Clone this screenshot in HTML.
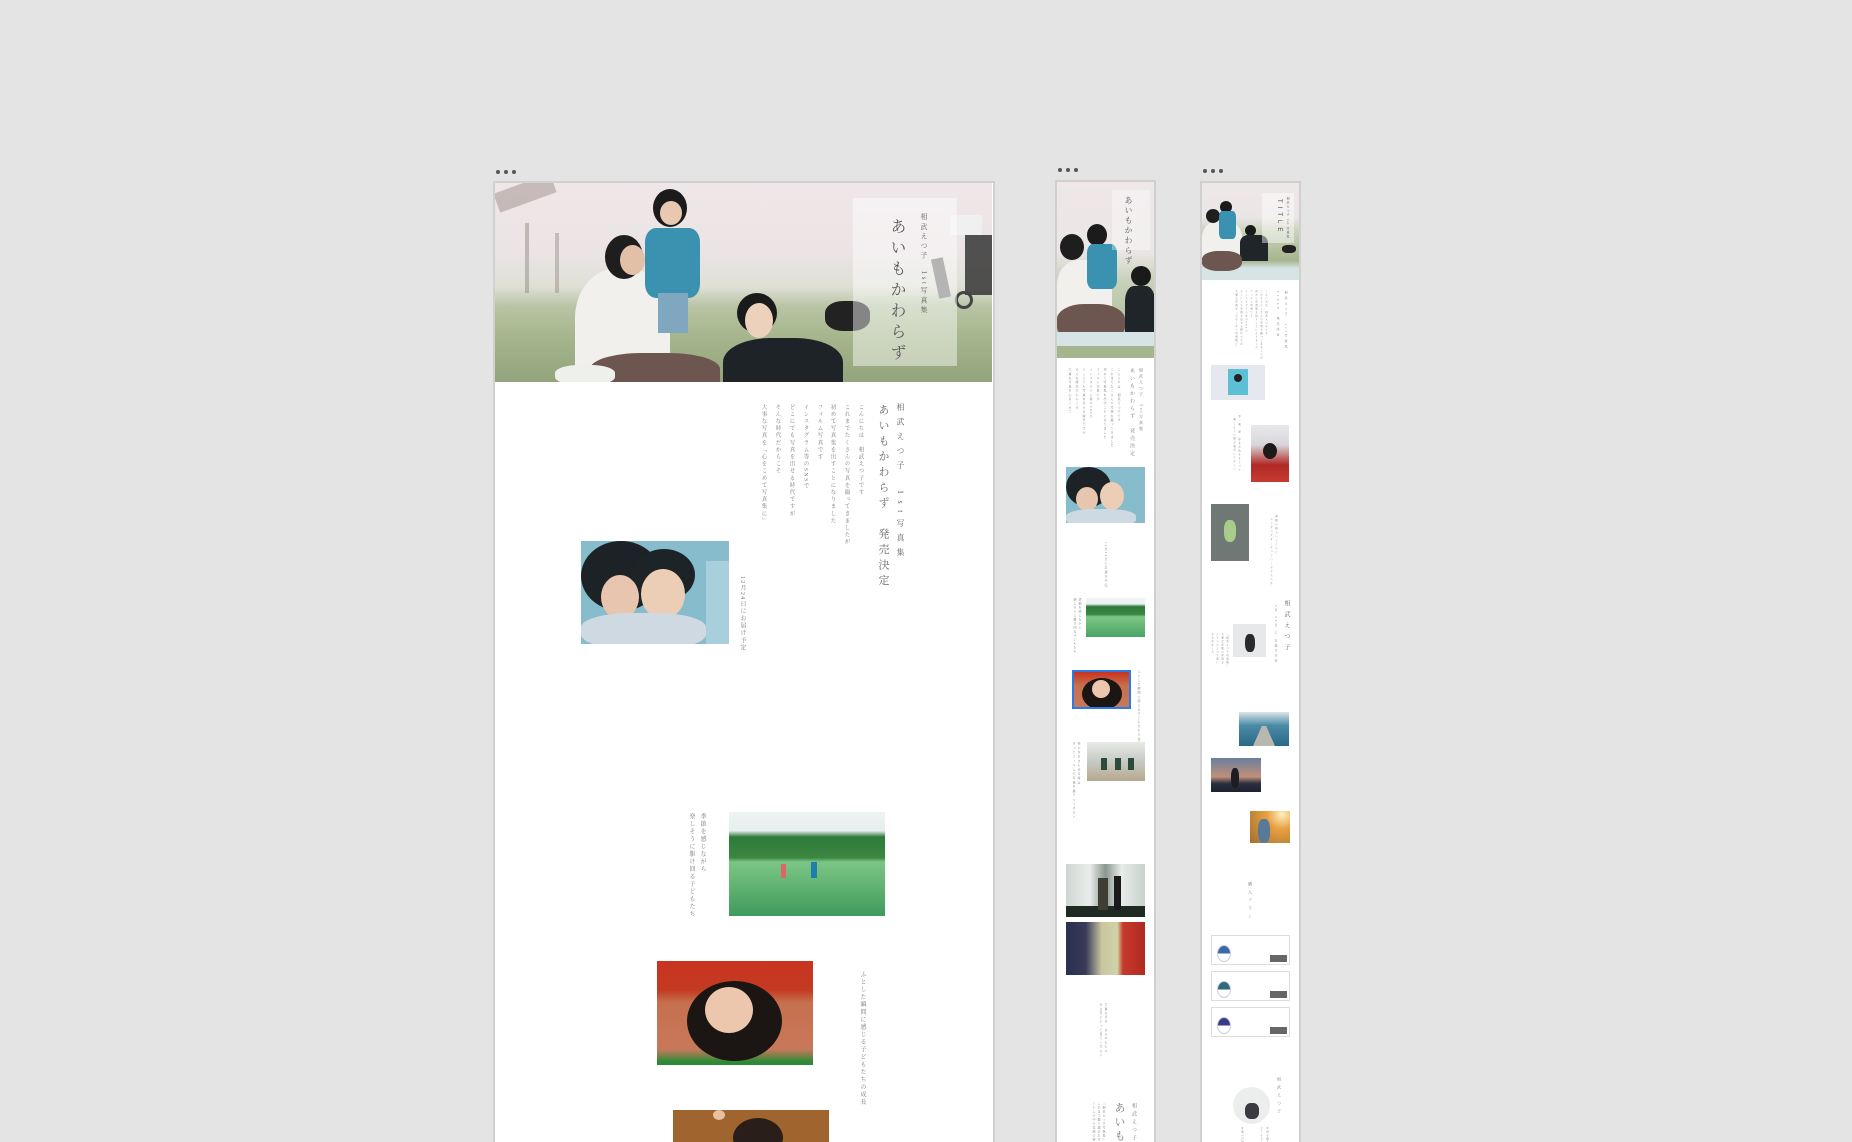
<!DOCTYPE html>
<html style="width:1852px;height:1142px;overflow:hidden"><head><meta charset="utf-8">
<style>
*{margin:0;padding:0;box-sizing:border-box}
body{width:1852px;height:1142px;background:#e4e4e4;position:relative;overflow:hidden;font-family:"Liberation Serif","Noto Serif CJK SC","Noto Sans CJK JP",serif;color:#777}
.a{position:absolute}
.fr{position:absolute;background:#fff;border:2px solid #d0d0d0;border-bottom:none}
.dot{position:absolute;width:4px;height:4px;border-radius:50%;background:#555}
.v{position:absolute;writing-mode:vertical-rl;white-space:nowrap;line-height:1}
.hero{background:linear-gradient(180deg,#efe6e8 0%,#ebe4e5 35%,#dfe0d6 52%,#b8c4a4 62%,#a3b38a 80%,#93a47c 100%)}
.blk{position:absolute;border-radius:40%}
</style></head><body>

<!-- main frame -->
<div class="dot" style="left:496px;top:170px"></div><div class="dot" style="left:504px;top:170px"></div><div class="dot" style="left:512px;top:170px"></div>
<div class="fr" style="left:493px;top:181px;width:502px;height:961px"></div>
<div class="a hero" style="left:495px;top:183px;width:497px;height:199px;overflow:hidden">
  <div class="a" style="left:0;top:0;width:60px;height:20px;background:#8a7a75;transform:rotate(-20deg);opacity:.4"></div>
  <div class="a" style="left:30px;top:40px;width:4px;height:70px;background:#8a807a;opacity:.45"></div>
  <div class="a" style="left:60px;top:50px;width:4px;height:60px;background:#8a807a;opacity:.4"></div>
  <div class="blk" style="left:80px;top:85px;width:95px;height:110px;background:#f2f0ec;border-radius:45% 45% 10% 10%"></div>
  <div class="blk" style="left:110px;top:52px;width:38px;height:44px;background:#1e1e1e;border-radius:50%"></div>
  <div class="blk" style="left:125px;top:62px;width:25px;height:30px;background:#e2c0a8;border-radius:50%"></div>
  <div class="blk" style="left:158px;top:6px;width:34px;height:38px;background:#1b1b1b;border-radius:50%"></div>
  <div class="blk" style="left:165px;top:18px;width:22px;height:24px;background:#e8c8b0;border-radius:50%"></div>
  <div class="blk" style="left:150px;top:45px;width:55px;height:70px;background:#3a92b0;border-radius:20%"></div>
  <div class="a" style="left:163px;top:110px;width:30px;height:40px;background:#7fa8c0"></div>
  <div class="blk" style="left:242px;top:110px;width:40px;height:40px;background:#1a1a1a;border-radius:50%"></div>
  <div class="blk" style="left:250px;top:120px;width:28px;height:35px;background:#ecd2bd;border-radius:50%"></div>
  <div class="blk" style="left:228px;top:155px;width:120px;height:60px;background:#1d2326;border-radius:40% 40% 0 0"></div>
  <div class="blk" style="left:95px;top:170px;width:130px;height:40px;background:#6e5650;border-radius:40% 40% 0 0"></div>
  <div class="blk" style="left:60px;top:182px;width:60px;height:20px;background:#eef0ec"></div>
  <div class="blk" style="left:330px;top:118px;width:45px;height:30px;background:#222"></div>
  <div class="a" style="left:455px;top:32px;width:32px;height:20px;background:#f0f0f0"></div>
  <div class="a" style="left:470px;top:52px;width:27px;height:60px;background:#2a2a2a;opacity:.8"></div>
  <div class="a" style="left:440px;top:75px;width:12px;height:40px;background:#777;transform:rotate(-12deg)"></div>
  <div class="a" style="left:460px;top:108px;width:18px;height:18px;border:3px solid #444;border-radius:50%"></div>
  <div class="a" style="left:358px;top:15px;width:104px;height:168px;background:rgba(255,255,255,.45)"></div>
  <div class="v" style="left:393px;top:35px;font-size:16px;letter-spacing:5px;color:#555">あいもかわらず</div>
  <div class="v" style="left:425px;top:30px;font-size:7px;letter-spacing:2.6px;color:#666">相武えつ子　1st写真集</div>
</div>

<div class="v" style="left:896px;top:403px;font-size:8px;letter-spacing:6.5px;color:#666">相武えつ子　1st写真集</div>
<div class="v" style="left:877px;top:404px;font-size:11px;letter-spacing:4.5px;color:#666">あいもかわらず　発売決定</div>
<div class="v" style="left:857px;top:404px;font-size:5.5px;letter-spacing:1.6px">こんにちは　相武えつ子です</div>
<div class="v" style="left:843px;top:404px;font-size:5.5px;letter-spacing:1.6px">これまでたくさんの写真を撮ってきましたが</div>
<div class="v" style="left:829px;top:404px;font-size:5.5px;letter-spacing:1.6px">初めて写真集を出すことになりました</div>
<div class="v" style="left:816px;top:404px;font-size:5.5px;letter-spacing:1.6px">フィルム写真です</div>
<div class="v" style="left:802px;top:404px;font-size:5.5px;letter-spacing:1.6px">インスタグラム等のSNSで</div>
<div class="v" style="left:788px;top:404px;font-size:5.5px;letter-spacing:1.6px">どこにでも写真を出せる時代ですが</div>
<div class="v" style="left:774px;top:404px;font-size:5.5px;letter-spacing:1.6px">そんな時代だからこそ</div>
<div class="v" style="left:760px;top:404px;font-size:5.5px;letter-spacing:1.6px">大事な写真を『心をこめて写真集に』</div>

<!-- girls photo -->
<div class="a" style="left:581px;top:541px;width:148px;height:103px;background:#86bccc;overflow:hidden">
  <div class="a" style="left:0;top:0;width:80px;height:70px;background:#1c2226;border-radius:50%"></div>
  <div class="a" style="left:52px;top:8px;width:62px;height:52px;background:#1d2428;border-radius:50%"></div>
  <div class="a" style="left:20px;top:34px;width:38px;height:44px;background:#e8c5ae;border-radius:50%"></div>
  <div class="a" style="left:60px;top:28px;width:44px;height:50px;background:#eccdb6;border-radius:50%"></div>
  <div class="a" style="left:0;top:72px;width:125px;height:36px;background:#cfd9e2;border-radius:40%"></div>
  <div class="a" style="left:125px;top:20px;width:23px;height:83px;background:#a9cfdc"></div>
</div>
<div class="v" style="left:739px;top:576px;font-size:6px;letter-spacing:1.3px">12月24日にお届け予定</div>

<!-- field -->
<div class="a" style="left:729px;top:812px;width:156px;height:104px;background:linear-gradient(180deg,#eef3f3 0%,#e6eeee 18%,#2f7a3a 24%,#3a8842 44%,#7cc586 48%,#5db06e 75%,#3e9a5e 100%)">
  <div class="a" style="left:52px;top:52px;width:5px;height:14px;background:#d66"></div>
  <div class="a" style="left:82px;top:50px;width:6px;height:16px;background:#1d7fae"></div>
</div>
<div class="v" style="left:699px;top:813px;font-size:6px;letter-spacing:1.5px">季節を感じながら</div>
<div class="v" style="left:688px;top:813px;font-size:6px;letter-spacing:1.5px">楽しそうに駆け回る子どもたち</div>

<!-- red -->
<div class="a" style="left:657px;top:961px;width:156px;height:104px;background:linear-gradient(180deg,#c83420 0%,#c43a22 28%,#c6704e 40%,#c8785a 85%,#2c8a36 97%);overflow:hidden">
  <div class="a" style="left:30px;top:20px;width:95px;height:80px;background:#1b1614;border-radius:50%"></div>
  <div class="a" style="left:48px;top:26px;width:48px;height:46px;background:#ecc7ae;border-radius:50%"></div>
</div>
<div class="v" style="left:859px;top:971px;font-size:6px;letter-spacing:1.5px">ふとした瞬間に感じる子どもたちの成長</div>

<!-- bottom -->
<div class="a" style="left:673px;top:1110px;width:156px;height:40px;background:#a0652e;overflow:hidden">
  <div class="a" style="left:60px;top:8px;width:50px;height:40px;background:#2a1e1a;border-radius:50%"></div>
  <div class="a" style="left:40px;top:0;width:12px;height:10px;background:#e8c0a0;border-radius:50%"></div>
</div>

<!-- frame 2 -->
<div class="dot" style="left:1058px;top:168px"></div><div class="dot" style="left:1066px;top:168px"></div><div class="dot" style="left:1074px;top:168px"></div>
<div class="fr" style="left:1055px;top:180px;width:101px;height:962px"></div>
<div class="a" style="left:1057px;top:182px;width:97px;height:176px;overflow:hidden;background:linear-gradient(180deg,#efe7e8 0%,#ebe6e6 40%,#c9d2bb 55%,#a6b58e 100%)">
  <div class="a" style="left:0;top:78px;width:55px;height:60px;background:#f2f0ec;border-radius:40% 40% 10% 10%"></div>
  <div class="a" style="left:3px;top:52px;width:24px;height:26px;background:#1e1e1e;border-radius:50%"></div>
  <div class="a" style="left:30px;top:42px;width:20px;height:22px;background:#1b1b1b;border-radius:50%"></div>
  <div class="a" style="left:30px;top:62px;width:30px;height:45px;background:#3a92b0;border-radius:20%"></div>
  <div class="a" style="left:74px;top:84px;width:20px;height:20px;background:#1a1a1a;border-radius:50%"></div>
  <div class="a" style="left:68px;top:104px;width:30px;height:50px;background:#1f2528;border-radius:30% 30% 0 0"></div>
  <div class="a" style="left:0;top:122px;width:68px;height:38px;background:#6e5650;border-radius:40%"></div>
  <div class="a" style="left:0;top:150px;width:97px;height:14px;background:#d6e4e6"></div>
  <div class="a" style="left:0;top:164px;width:97px;height:12px;background:#a6b58e"></div>
  <div class="a" style="left:55px;top:8px;width:38px;height:60px;background:rgba(255,255,255,.35)"></div>
  <div class="v" style="left:67px;top:14px;font-size:8px;letter-spacing:2px;color:#555">あいもかわらず</div>
</div>
<div class="v" style="left:1139px;top:368px;font-size:4px;letter-spacing:2px">相武えつ子　1st写真集</div>
<div class="v" style="left:1129px;top:368px;font-size:5px;letter-spacing:2.5px">あいもかわらず　発売決定</div>
<div class="v" style="left:1117px;top:368px;font-size:3px;letter-spacing:1.2px">こんにちは　相武えつ子です</div>
<div class="v" style="left:1110px;top:368px;font-size:3px;letter-spacing:1.2px">これまでたくさんの写真を撮ってきました</div>
<div class="v" style="left:1103px;top:368px;font-size:3px;letter-spacing:1.2px">初めて写真集を出すことになりました</div>
<div class="v" style="left:1096px;top:368px;font-size:3px;letter-spacing:1.2px">フィルム写真です</div>
<div class="v" style="left:1089px;top:368px;font-size:3px;letter-spacing:1.2px">インスタグラム等のSNSで</div>
<div class="v" style="left:1082px;top:368px;font-size:3px;letter-spacing:1.2px">どこにでも写真を出せる時代ですが</div>
<div class="v" style="left:1075px;top:368px;font-size:3px;letter-spacing:1.2px">そんな時代だからこそ</div>
<div class="v" style="left:1068px;top:368px;font-size:3px;letter-spacing:1.2px">大事な写真を心をこめて</div>
<div class="a" style="left:1066px;top:467px;width:79px;height:56px;background:#86bccc;overflow:hidden">
  <div class="a" style="left:0;top:0;width:45px;height:40px;background:#1c2226;border-radius:50%"></div>
  <div class="a" style="left:10px;top:20px;width:22px;height:24px;background:#e8c5ae;border-radius:50%"></div>
  <div class="a" style="left:34px;top:15px;width:24px;height:28px;background:#eccdb6;border-radius:50%"></div>
  <div class="a" style="left:0;top:42px;width:70px;height:18px;background:#cfd9e2;border-radius:40%"></div>
</div>
<div class="v" style="left:1104px;top:542px;font-size:3px;letter-spacing:1.3px">12月24日にお届け予定</div>
<div class="a" style="left:1086px;top:598px;width:59px;height:39px;background:linear-gradient(180deg,#eef3f3 0%,#eef3f3 15%,#2f7a3a 22%,#3a8842 42%,#7cc586 48%,#4aa466 100%)"></div>
<div class="v" style="left:1078px;top:598px;font-size:3px;letter-spacing:1px">季節を感じながら</div>
<div class="v" style="left:1073px;top:598px;font-size:3px;letter-spacing:1px">楽しそうに駆け回る子どもたち</div>
<div class="a" style="left:1072px;top:670px;width:59px;height:39px;border:2px solid #2a7be4;background:linear-gradient(180deg,#c83420 0%,#c6704e 40%,#c8785a 100%);overflow:hidden">
  <div class="a" style="left:8px;top:6px;width:40px;height:32px;background:#1b1614;border-radius:50%"></div>
  <div class="a" style="left:18px;top:8px;width:18px;height:18px;background:#ecc7ae;border-radius:50%"></div>
</div>
<div class="v" style="left:1137px;top:670px;font-size:3px;letter-spacing:1.2px">ふとした瞬間に感じる子どもたちの成長</div>
<div class="a" style="left:1087px;top:742px;width:58px;height:39px;background:linear-gradient(180deg,#e8eae6 0%,#c9cec8 45%,#b6a88e 100%)">
  <div class="a" style="left:14px;top:16px;width:6px;height:12px;background:#2d4a3e"></div>
  <div class="a" style="left:28px;top:16px;width:6px;height:12px;background:#2d4a3e"></div>
  <div class="a" style="left:41px;top:16px;width:6px;height:12px;background:#2d4a3e"></div>
</div>
<div class="v" style="left:1077px;top:742px;font-size:3px;letter-spacing:1.3px">何かをあきらめる時は</div>
<div class="v" style="left:1072px;top:742px;font-size:3px;letter-spacing:1.3px">ずっとフィルムの写真を撮りつづけたい</div>
<div class="a" style="left:1066px;top:864px;width:79px;height:53px;background:linear-gradient(90deg,#cfd6d2 0%,#e9ecea 30%,#8a9690 50%,#e8ecea 70%,#c8d2cc 100%)">
  <div class="a" style="left:0;top:42px;width:79px;height:11px;background:#1e2a22"></div>
  <div class="a" style="left:32px;top:14px;width:10px;height:32px;background:#3e3e34"></div>
  <div class="a" style="left:48px;top:12px;width:7px;height:34px;background:#1a1a1a"></div>
</div>
<div class="a" style="left:1066px;top:922px;width:79px;height:53px;background:linear-gradient(90deg,#2a3050 0%,#3a3a5a 25%,#c8c6a0 45%,#d0d2a8 65%,#c63a2a 72%,#b02a20 100%)"></div>
<div class="v" style="left:1104px;top:1003px;font-size:3px;letter-spacing:1.2px">大事な日を　おさめたもの</div>
<div class="v" style="left:1099px;top:1003px;font-size:3px;letter-spacing:1.2px">ぜひ手にとって見てください</div>
<div class="v" style="left:1131px;top:1103px;font-size:5px;letter-spacing:3px">相武えつ子</div>
<div class="v" style="left:1113px;top:1102px;font-size:11px;letter-spacing:3px">あいもか</div>
<div class="v" style="left:1102px;top:1102px;font-size:3px;letter-spacing:1px">『相武えつ子写真集』</div>
<div class="v" style="left:1097px;top:1102px;font-size:3px;letter-spacing:1px">これまで撮り溜めた写真</div>
<div class="v" style="left:1092px;top:1102px;font-size:3px;letter-spacing:1px">くらしの中の家族の姿</div>

<!-- frame 3 -->
<div class="dot" style="left:1203px;top:169px"></div><div class="dot" style="left:1211px;top:169px"></div><div class="dot" style="left:1219px;top:169px"></div>
<div class="fr" style="left:1200px;top:181px;width:101px;height:961px"></div>
<div class="a" style="left:1202px;top:183px;width:97px;height:97px;overflow:hidden;background:linear-gradient(180deg,#efe7e8 0%,#ebe6e6 35%,#c9d2bb 50%,#a6b58e 80%,#d6e4e6 88%,#d6e4e6 100%)">
  <div class="a" style="left:0;top:38px;width:40px;height:40px;background:#f2f0ec;border-radius:40% 40% 10% 10%"></div>
  <div class="a" style="left:4px;top:26px;width:14px;height:14px;background:#1e1e1e;border-radius:50%"></div>
  <div class="a" style="left:18px;top:18px;width:12px;height:12px;background:#1b1b1b;border-radius:50%"></div>
  <div class="a" style="left:17px;top:28px;width:17px;height:28px;background:#3a92b0;border-radius:20%"></div>
  <div class="a" style="left:43px;top:42px;width:11px;height:11px;background:#1a1a1a;border-radius:50%"></div>
  <div class="a" style="left:38px;top:52px;width:28px;height:26px;background:#1f2528;border-radius:30% 30% 0 0"></div>
  <div class="a" style="left:0;top:68px;width:40px;height:20px;background:#6e5650;border-radius:40%"></div>
  <div class="a" style="left:80px;top:62px;width:14px;height:8px;background:#222;border-radius:40%"></div>
  <div class="a" style="left:60px;top:10px;width:32px;height:50px;background:rgba(255,255,255,.45)"></div>
  <div class="v" style="left:74px;top:16px;font-size:6px;letter-spacing:4px;color:#444;font-family:'Liberation Sans',sans-serif">TITLE</div>
  <div class="v" style="left:84px;top:14px;font-size:3px;letter-spacing:1px;color:#555">相武えつ子 1st 写真集</div>
</div>
<div class="v" style="left:1284px;top:291px;font-size:3px;letter-spacing:2.4px">相武えつ子　1st写真集</div>
<div class="v" style="left:1276px;top:291px;font-size:3px;letter-spacing:2.4px">TITLE　発売決定</div>
<div class="v" style="left:1264px;top:290px;font-size:2.5px;letter-spacing:1px">こんにちは　相武えつ子です</div>
<div class="v" style="left:1259px;top:290px;font-size:2.5px;letter-spacing:1px">これまでたくさんの写真を撮ってきましたが</div>
<div class="v" style="left:1254px;top:290px;font-size:2.5px;letter-spacing:1px">初めて写真集を出すことになりました</div>
<div class="v" style="left:1249px;top:290px;font-size:2.5px;letter-spacing:1px">フィルム写真です</div>
<div class="v" style="left:1244px;top:290px;font-size:2.5px;letter-spacing:1px">インスタグラム等のSNSで</div>
<div class="v" style="left:1239px;top:290px;font-size:2.5px;letter-spacing:1px">どこにでも写真を出せる時代ですが</div>
<div class="v" style="left:1234px;top:290px;font-size:2.5px;letter-spacing:1px">大事な写真を『心をこめて写真集に』</div>
<div class="a" style="left:1211px;top:365px;width:54px;height:35px;background:#e6e8f0">
  <div class="a" style="left:17px;top:4px;width:20px;height:26px;background:#5cbfd6"></div>
  <div class="a" style="left:23px;top:9px;width:8px;height:8px;background:#222;border-radius:50%"></div>
</div>
<div class="v" style="left:1237px;top:415px;font-size:2.5px;letter-spacing:1.3px">赤、黄、緑　好きな色をまとって</div>
<div class="v" style="left:1232px;top:418px;font-size:2.5px;letter-spacing:1.3px">楽しそうに遊ぶ姿がいとおしい</div>
<div class="a" style="left:1251px;top:425px;width:38px;height:57px;background:linear-gradient(180deg,#e8e8ec 0%,#d8d6da 35%,#b02a26 70%,#c83a30 100%)">
  <div class="a" style="left:12px;top:18px;width:14px;height:16px;background:#1e1a1a;border-radius:50%"></div>
</div>
<div class="a" style="left:1211px;top:504px;width:38px;height:57px;background:#6f7874">
  <div class="a" style="left:13px;top:16px;width:12px;height:22px;background:#a8cc8a;border-radius:40%"></div>
</div>
<div class="v" style="left:1274px;top:515px;font-size:2.5px;letter-spacing:1.5px">季節の移ろいとともに</div>
<div class="v" style="left:1269px;top:518px;font-size:2.5px;letter-spacing:1.5px">少しずつ大きくなっていく子どもたち</div>
<div class="v" style="left:1283px;top:600px;font-size:6px;letter-spacing:5px;color:#666">相武えつ子</div>
<div class="v" style="left:1274px;top:605px;font-size:3px;letter-spacing:2px">2月 24日 に お届け予定</div>
<div class="a" style="left:1233px;top:624px;width:33px;height:33px;background:#e6e8ea">
  <div class="a" style="left:12px;top:10px;width:10px;height:18px;background:#2a2a2a;border-radius:40%"></div>
</div>
<div class="v" style="left:1225px;top:633px;font-size:2.5px;letter-spacing:1px">『相武えつ子写真集』</div>
<div class="v" style="left:1220px;top:633px;font-size:2.5px;letter-spacing:1px">大事な家族の写真を</div>
<div class="v" style="left:1215px;top:633px;font-size:2.5px;letter-spacing:1px">ひとつひとつ丁寧に</div>
<div class="v" style="left:1210px;top:633px;font-size:2.5px;letter-spacing:1px">おさめました</div>
<div class="a" style="left:1239px;top:712px;width:50px;height:34px;background:linear-gradient(180deg,#d8e4ea 0%,#4a8aa6 40%,#2a6a86 100%)">
  <div class="a" style="left:14px;top:14px;width:22px;height:20px;background:#b8b8b0;clip-path:polygon(40% 0,60% 0,100% 100%,0 100%)"></div>
</div>
<div class="a" style="left:1211px;top:758px;width:50px;height:34px;background:linear-gradient(180deg,#6a7ea0 0%,#c09078 55%,#2a3040 75%,#1e2230 100%)">
  <div class="a" style="left:20px;top:10px;width:8px;height:20px;background:#1c1c22;border-radius:40%"></div>
</div>
<div class="a" style="left:1250px;top:811px;width:40px;height:32px;background:radial-gradient(circle at 80% 10%,#fff0c0 0%,#e8a040 35%,#a07030 100%)">
  <div class="a" style="left:8px;top:8px;width:12px;height:24px;background:#5a7898;border-radius:40%"></div>
</div>
<div class="v" style="left:1248px;top:882px;font-size:4px;letter-spacing:4px">購入プラン</div>

<div class="a" style="left:1211px;top:935px;width:79px;height:30px;border:1px solid #ddd;background:#fff">
  <div class="a" style="left:5px;top:9px;width:14px;height:17px;border-radius:50%;border:1px solid #ccd;background:linear-gradient(180deg,#3a6aa8 50%,#fff 50%)"></div>
  <div class="a" style="left:58px;top:19px;width:17px;height:7px;background:#666"></div>
</div>
<div class="a" style="left:1211px;top:971px;width:79px;height:30px;border:1px solid #ddd;background:#fff">
  <div class="a" style="left:5px;top:9px;width:14px;height:17px;border-radius:50%;border:1px solid #ccd;background:linear-gradient(180deg,#2f6a7a 50%,#fff 50%)"></div>
  <div class="a" style="left:58px;top:19px;width:17px;height:7px;background:#666"></div>
</div>
<div class="a" style="left:1211px;top:1007px;width:79px;height:30px;border:1px solid #ddd;background:#fff">
  <div class="a" style="left:5px;top:9px;width:14px;height:17px;border-radius:50%;border:1px solid #ccd;background:linear-gradient(180deg,#3a3a88 50%,#fff 50%)"></div>
  <div class="a" style="left:58px;top:19px;width:17px;height:7px;background:#666"></div>
</div>
<div class="a" style="left:1233px;top:1087px;width:37px;height:37px;border-radius:50%;background:#eceeee;overflow:hidden">
  <div class="a" style="left:12px;top:16px;width:14px;height:16px;background:#3a3a40;border-radius:40%"></div>
</div>
<div class="v" style="left:1277px;top:1077px;font-size:4px;letter-spacing:4px">相武えつ子</div>
<div class="v" style="left:1265px;top:1127px;font-size:2.5px;letter-spacing:1px">写真を撮り</div>
<div class="v" style="left:1259px;top:1127px;font-size:2.5px;letter-spacing:1px">どうぞよろ</div>
<div class="v" style="left:1240px;top:1127px;font-size:2.5px;letter-spacing:1px">家族の日常</div>
</body></html>
